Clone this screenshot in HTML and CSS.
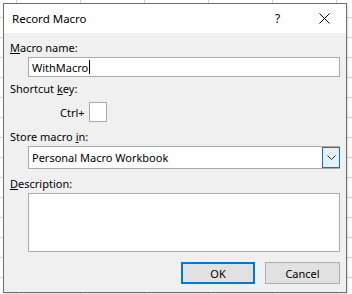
FILE: index.html
```html
<!DOCTYPE html>
<html lang="en">
<head>
    <meta charset="UTF-8">
    <title>Record Macro</title>
    <link rel="stylesheet" href="styles.css">
</head>
<body>
    <div class="dialog">
        <div class="titlebar">
            <span class="title">Record Macro</span>
            <span class="help">?</span>
            <span class="close">
                <svg width="11" height="11" viewBox="0 0 11 11">
                    <path d="M0.5 0.5 L10.5 10.5 M10.5 0.5 L0.5 10.5" stroke="#000" stroke-width="1" fill="none"/>
                </svg>
            </span>
        </div>

        <div class="content">
            <div class="label"><u>M</u>acro name:</div>
            <div class="field text-field">
                <span class="value">WithMacro</span><span class="caret"></span>
            </div>

            <div class="label label-gap">Shortcut <u>k</u>ey:</div>
            <div class="shortcut-row">
                <span class="ctrl">Ctrl+</span>
                <div class="field key-box"></div>
            </div>

            <div class="label label-gap-lg">Store macro <u>i</u>n:</div>
            <div class="field select-field">
                <span class="value">Personal Macro Workbook</span>
                <span class="drop-button">
                    <svg width="9" height="5" viewBox="0 0 9 5">
                        <path d="M0.5 0.5 L4.5 4.5 L8.5 0.5" stroke="#333" stroke-width="1" fill="none"/>
                    </svg>
                </span>
            </div>

            <div class="label label-gap-lg"><u>D</u>escription:</div>
            <div class="field description"></div>

            <div class="buttons">
                <button class="button button-default">OK</button>
                <button class="button">Cancel</button>
            </div>
        </div>
    </div>
</body>
</html>
```

FILE: styles.css
```css
body {
    margin: 0;
    height: 294px;
    overflow: hidden;
    font-family: "Noto Sans", "Open Sans", sans-serif;
    font-size: 11px;
    color: #000;
    background-color: #fff;
    background-image:
        linear-gradient(to right, #d4d4d4 1px, transparent 1px),
        linear-gradient(to bottom, #d4d4d4 1px, transparent 1px);
    background-size: 64px 20px;
    background-position: 16px 17px;
}
.dialog {
    margin: 3px 0 0 3px;
    width: 342px;
    border: 1px solid #6f6f6f;
    background: #f0f0f0;
    box-shadow: 1px 1px 2px rgba(0,0,0,0.15);
}
.titlebar {
    height: 29px;
    background: #fff;
    display: flex;
    align-items: center;
}
.title {
    margin-left: 8px;
    flex: 1;
    font-size: 11.5px;
}
.help {
    width: 12px;
    margin-right: 32px;
    font-size: 12px;
    line-height: 13px;
}
.close {
    display: flex;
    margin-right: 16px;
}
.content {
    padding: 7px 6px 8px 6px;
    display: flex;
    flex-direction: column;
}
.label {
    line-height: 16px;
    height: 16px;
    margin-bottom: 1px;
}
.label-gap {
    margin-top: 4px;
}
.label-gap-lg {
    margin-top: 7px;
}
.field {
    background: #fff;
    border: 1px solid #ababab;
    box-sizing: border-box;
}
.text-field {
    margin-left: 18px;
    height: 20px;
    display: flex;
    align-items: center;
    padding-left: 3px;
}
.caret {
    width: 1px;
    height: 14px;
    background: #000;
    margin-left: 1px;
}
.shortcut-row {
    margin-top: 4px;
    display: flex;
    align-items: center;
    padding-left: 50px;
}
.ctrl {
    margin-right: 4px;
}
.key-box {
    width: 18px;
    height: 20px;
}
.select-field {
    margin-left: 18px;
    height: 23px;
    display: flex;
    align-items: center;
    padding-left: 3px;
}
.select-field .value {
    flex: 1;
}
.drop-button {
    width: 18px;
    height: 21px;
    box-sizing: border-box;
    border: 1px solid #0078d7;
    background: #e5f1fb;
    display: flex;
    align-items: center;
    justify-content: center;
    margin-right: -1px;
}
.description {
    margin-left: 18px;
    height: 59px;
}
.buttons {
    margin-top: 10px;
    display: flex;
    justify-content: flex-end;
    gap: 10px;
}
.button {
    font-family: inherit;
    font-size: 11px;
    width: 75px;
    height: 22px;
    padding: 0;
    background: #e1e1e1;
    border: 1px solid #adadad;
    color: #000;
}
.button-default {
    width: 74px;
    border: 2px solid #0078d7;
}
```
